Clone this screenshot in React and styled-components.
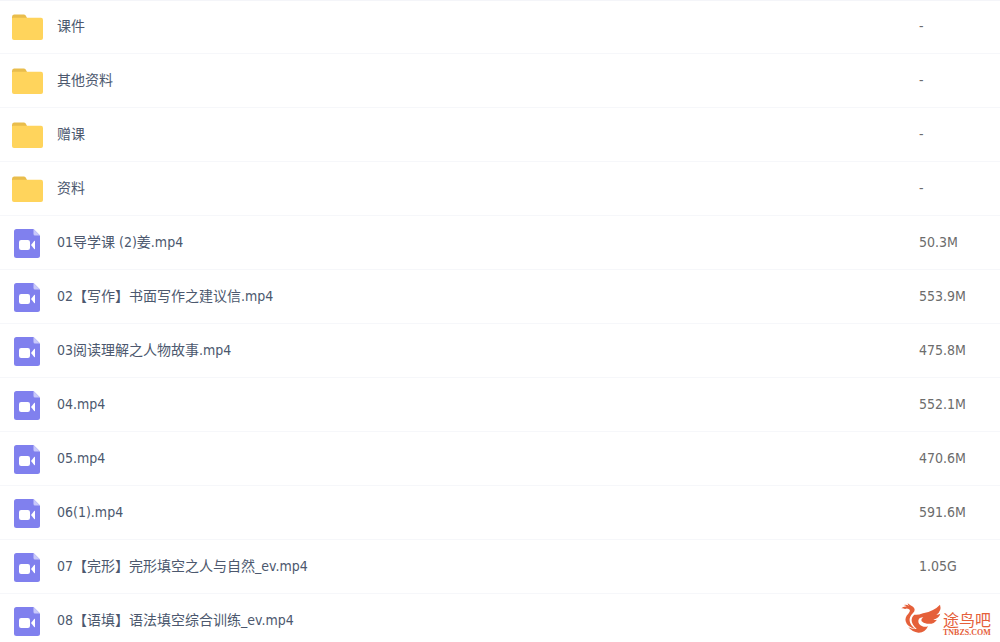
import React from 'react';
import styled, { createGlobalStyle } from 'styled-components';

const GlobalStyle = createGlobalStyle`
  * { box-sizing: border-box; }
  body {
    margin: 0;
    background: #fff;
    font-family: "DejaVu Sans Condensed", "Noto Sans CJK SC", sans-serif;
  }
`;

const Page = styled.main`
  position: relative;
  height: 100vh;
  overflow: hidden;
`;

const FileTable = styled.table`
  width: 100%;
  table-layout: fixed;
  border-collapse: separate;
  border-spacing: 0;
  font-size: 14px;
  line-height: 20px;
`;

const FileRow = styled.tr`
  height: 54px;

  &:first-child td {
    border-top: 1px solid #f4f5f9;
  }
`;

const Cell = styled.td`
  padding: 0;
  border-bottom: 1px solid #f6f7fa;
  vertical-align: middle;
`;

const SizeCell = styled(Cell)`
  width: 81px;
  padding-bottom: 2px;
  color: #6c6c6c;
`;

const FileLink = styled.a`
  display: flex;
  align-items: center;
  padding-left: 11px;
  color: #4c586e;
  text-decoration: none;
`;

const FileName = styled.span`
  padding-bottom: 2px;
`;

const IconBox = styled.span`
  display: flex;
  justify-content: center;
  width: 32px;
  margin-right: 14px;
`;

const Brand = styled.a`
  position: absolute;
  right: 9px;
  bottom: 5px;
  display: flex;
  align-items: flex-end;
  color: #e5603a;
  text-decoration: none;
`;

const BrandText = styled.span`
  display: flex;
  flex-direction: column;
`;

const BrandName = styled.span`
  font-size: 16px;
  line-height: 16px;
`;

const BrandDomain = styled.span`
  font-family: "Liberation Serif", serif;
  font-size: 8px;
  font-weight: 700;
  line-height: 8px;
`;

const FolderIcon = () => (
  <svg width="32" height="28" viewBox="0 0 32 28" aria-hidden="true">
    <path d="M1 4Q1 1.5 3 1.5H13Q14.5 1.5 15 3L16.5 6V11H1Z" fill="#e9bd4c" />
    <path d="M1 5.5Q1 4.8 2 4.8H30Q32 4.8 32 7V25Q32 27 30 27H3Q1 27 1 25Z" fill="#ffd45c" />
  </svg>
);

const VideoIcon = () => (
  <svg width="28" height="30" viewBox="0 0 28 30" aria-hidden="true">
    <path d="M3.5 1H20.5L27 7.5V27.5Q27 30 24.5 30H3.5Q1 30 1 27.5V3.5Q1 1 3.5 1Z" fill="#8080ee" />
    <path d="M20.5 1L27 7.5H22Q20.5 7.5 20.5 6Z" fill="#c9c9fa" />
    <rect x="6" y="12" width="11" height="10" rx="2.2" fill="#fff" />
    <path d="M18 17L21.4 12.8Q22 12.5 22 13.5V20.5Q22 21.5 21.4 21.2Z" fill="#fff" />
  </svg>
);

const BirdLogo = () => (
  <svg width="42" height="34" viewBox="24 34 126 102" aria-hidden="true">
    <g fill="#e5603a">
      <path d="M25 50Q32 43 41 45Q38 41 32 40Q42 38 48 43Q44 38 44 35Q53 42 60 45Q70 54 60 64Q48 76 50 88Q52 102 68 112Q42 106 38 89Q35 77 46 66Q55 56 47 52Q42 49 36 52Q31 49 25 50Z" />
      <path d="M64 69Q74 71 90 65Q125 57 141 39Q147 58 130 69Q137 69 142 66Q138 79 121 84Q127 86 132 84Q122 99 102 96Q90 94 86 89Q83 82 91 77Q78 77 76 87Q75 98 88 104Q96 107 105 104Q96 124 76 123Q58 121 46 107Q62 115 71 111Q58 101 56 88Q55 76 64 69Z" />
    </g>
  </svg>
);

const files = [
  { name: '课件', size: '-', folder: true },
  { name: '其他资料', size: '-', folder: true },
  { name: '赠课', size: '-', folder: true },
  { name: '资料', size: '-', folder: true },
  { name: '01导学课 (2)姜.mp4', size: '50.3M' },
  { name: '02【写作】书面写作之建议信.mp4', size: '553.9M' },
  { name: '03阅读理解之人物故事.mp4', size: '475.8M' },
  { name: '04.mp4', size: '552.1M' },
  { name: '05.mp4', size: '470.6M' },
  { name: '06(1).mp4', size: '591.6M' },
  { name: '07【完形】完形填空之人与自然_ev.mp4', size: '1.05G' },
  { name: '08【语填】语法填空综合训练_ev.mp4', size: '' },
];

export default function App() {
  return (
    <Page lang="zh-CN">
      <GlobalStyle />
      <FileTable>
        <tbody>
          {files.map((file) => (
            <FileRow key={file.name}>
              <Cell>
                <FileLink href="#">
                  <IconBox>{file.folder ? <FolderIcon /> : <VideoIcon />}</IconBox>
                  <FileName>{file.name}</FileName>
                </FileLink>
              </Cell>
              <SizeCell>{file.size}</SizeCell>
            </FileRow>
          ))}
        </tbody>
      </FileTable>
      <Brand href="#">
        <BirdLogo />
        <BrandText>
          <BrandName>途鸟吧</BrandName>
          <BrandDomain>TNBZS.COM</BrandDomain>
        </BrandText>
      </Brand>
    </Page>
  );
}
